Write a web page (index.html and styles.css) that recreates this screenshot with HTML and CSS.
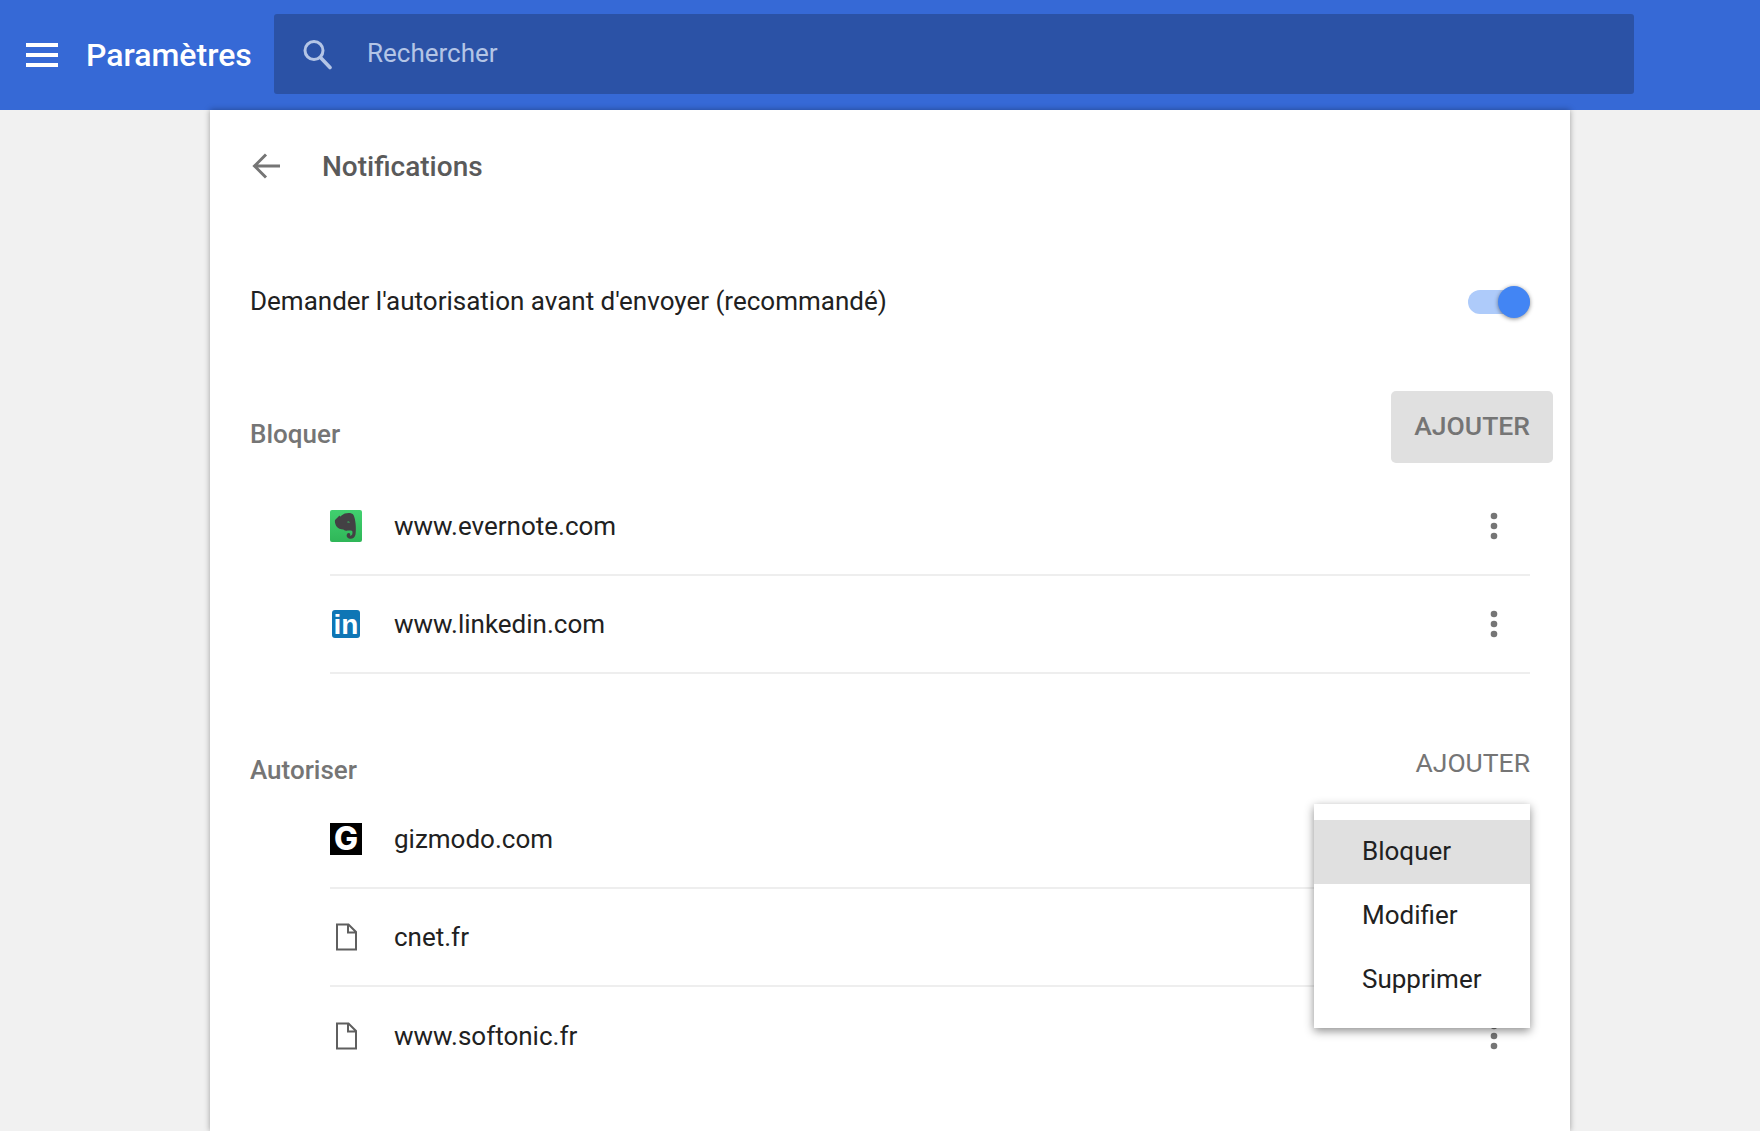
FILE: index.html
```html
<!DOCTYPE html>
<html lang="fr">
<head>
  <meta charset="UTF-8">
  <title>Paramètres</title>
  <link rel="stylesheet" href="styles.css">
</head>
<body>
<header class="top-bar">
  <svg class="menu-icon" viewBox="0 0 32 24" width="32" height="24">
    <path d="M0 0h32v4H0zM0 10h32v4H0zM0 20h32v4H0z" fill="#fff"/>
  </svg>
  <div class="app-title">Paramètres</div>
  <div class="search-box">
    <svg class="search-icon" viewBox="0 0 30 32" width="30" height="32">
      <circle cx="12" cy="12.5" r="9" fill="none" stroke="#b4c5e6" stroke-width="3"/>
      <path d="M18.5 19.5L28 29.5" stroke="#b4c5e6" stroke-width="3.6" stroke-linecap="round"/>
    </svg>
    <span class="search-text">Rechercher</span>
  </div>
</header>

<main class="card">
  <div class="page-head">
    <svg class="back-icon" viewBox="0 0 28 28" width="28" height="28">
      <path d="M28 14H3M14 2.5L2.5 14L14 25.5" fill="none" stroke="#757575" stroke-width="3"/>
    </svg>
    <h1>Notifications</h1>
  </div>

  <div class="ask-row">
    <span>Demander l'autorisation avant d'envoyer (recommandé)</span>
    <div class="toggle"><div class="toggle-thumb"></div></div>
  </div>

  <section class="block-section">
    <div class="section-head">
      <h2>Bloquer</h2>
      <button class="add-btn add-btn-active"><span class="add-label">AJOUTER</span></button>
    </div>
    <div class="site-list">
      <div class="site-row">
        <div class="site-icon evernote">
          <svg viewBox="0 0 32 32" width="32" height="32">
            <path d="M5 10L9.5 5.5C10 7 10.5 6.5 11.5 5.5C15 2.5 21.5 2.2 23.5 5C25.5 9 26.5 18 25.5 24.5C25 28 21.5 29.5 19 28.5C16 27.5 16 23.5 18.5 23C20 22.8 21 24.5 19.8 25.6C22 26 22.8 24 22.4 21.5C22 20 20 20.5 17.5 20.5C15.5 21 14 20.5 13.5 19.5C11 19.5 7.5 18.5 6.2 16C5 13.5 4.7 12 5 10Z" fill="#434144"/>
            <path d="M17.5 11.5C18.5 11.2 19.6 11.6 20 12.7C19 12.4 18.2 12.4 17.5 12.7Z" fill="#37c564"/>
          </svg>
        </div>
        <span class="site-name">www.evernote.com</span>
        <svg class="more-icon" viewBox="0 0 8 28" width="8" height="28"><circle cx="4" cy="4" r="3.3"/><circle cx="4" cy="14" r="3.3"/><circle cx="4" cy="24" r="3.3"/></svg>
      </div>
      <div class="site-row">
        <div class="site-icon"><div class="linkedin">in</div></div>
        <span class="site-name">www.linkedin.com</span>
        <svg class="more-icon" viewBox="0 0 8 28" width="8" height="28"><circle cx="4" cy="4" r="3.3"/><circle cx="4" cy="14" r="3.3"/><circle cx="4" cy="24" r="3.3"/></svg>
      </div>
    </div>
  </section>

  <section class="allow-section">
    <div class="section-head">
      <h2>Autoriser</h2>
      <button class="add-btn"><span class="add-label">AJOUTER</span></button>
    </div>
    <div class="site-list">
      <div class="site-row">
        <div class="site-icon gizmodo">G</div>
        <span class="site-name">gizmodo.com</span>
      </div>
      <div class="site-row">
        <div class="site-icon">
          <svg viewBox="0 0 32 32" width="32" height="32">
            <path d="M7 3.5H18.5L26 11V28.5H7ZM18 3.5V11.5H26" fill="none" stroke="#5f5f5f" stroke-width="2"/>
          </svg>
        </div>
        <span class="site-name">cnet.fr</span>
      </div>
      <div class="site-row site-row-last">
        <div class="site-icon">
          <svg viewBox="0 0 32 32" width="32" height="32">
            <path d="M7 3.5H18.5L26 11V28.5H7ZM18 3.5V11.5H26" fill="none" stroke="#5f5f5f" stroke-width="2"/>
          </svg>
        </div>
        <span class="site-name">www.softonic.fr</span>
        <svg class="more-icon" viewBox="0 0 8 28" width="8" height="28"><circle cx="4" cy="4" r="3.3"/><circle cx="4" cy="14" r="3.3"/><circle cx="4" cy="24" r="3.3"/></svg>
      </div>
    </div>
  </section>

  <div class="popup-menu">
    <div class="popup-item popup-item-active">Bloquer</div>
    <div class="popup-item">Modifier</div>
    <div class="popup-item">Supprimer</div>
  </div>
</main>
</body>
</html>
```

FILE: styles.css
```css
* {
  margin: 0;
  padding: 0;
  box-sizing: border-box;
}

body {
  background-color: #f1f1f1;
  color: #212121;
  font-family: Roboto, "Liberation Sans", sans-serif;
  height: 100vh;
  overflow: hidden;
}

.top-bar {
  height: 110px;
  background-color: #3669d6;
  display: flex;
  align-items: center;
  padding-left: 26px;
}

.app-title {
  color: white;
  font-size: 32px;
  font-weight: 500;
  margin-left: 28px;
  width: 188px;
}

.search-box {
  width: 1360px;
  height: 80px;
  margin-top: -2px;
  background-color: #2b52a6;
  border-radius: 3px;
  display: flex;
  align-items: center;
  padding-left: 28px;
}

.search-text {
  color: #b4c5e6;
  font-size: 26px;
  margin-left: 35px;
  margin-bottom: 2px;
}

.card {
  position: relative;
  width: 1360px;
  height: 1021px;
  margin-left: 210px;
  padding: 0 40px;
  background-color: white;
  box-shadow: 0 0 6px rgba(0, 0, 0, 0.35);
}

.page-head {
  height: 112px;
  display: flex;
  align-items: center;
}

.back-icon {
  margin-left: 2px;
}

.page-head h1 {
  font-size: 28px;
  font-weight: 500;
  color: #5a5a5a;
  margin-left: 42px;
}

.ask-row {
  height: 158px;
  margin-bottom: 11px;
  display: flex;
  align-items: center;
  justify-content: space-between;
  font-size: 26px;
}

.toggle {
  position: relative;
  width: 62px;
  height: 24px;
  margin-top: 1px;
  border-radius: 12px;
  background-color: #aecbfa;
}

.toggle-thumb {
  position: absolute;
  right: 0;
  top: -4px;
  width: 32px;
  height: 32px;
  border-radius: 50%;
  background-color: #4285f4;
  box-shadow: 0 1px 4px rgba(0, 0, 0, 0.45);
}

.section-head {
  height: 72px;
  display: flex;
  align-items: center;
  justify-content: space-between;
}

.section-head h2 {
  font-size: 26px;
  font-weight: 500;
  color: #757575;
  margin-top: 14px;
}

.add-btn {
  height: 72px;
  padding: 0 23px;
  margin-right: -23px;
  border: none;
  border-radius: 5px;
  background: none;
  color: #757575;
  font-family: inherit;
  font-size: 26.5px;
}

.add-label {
  position: relative;
  top: -1px;
}

.add-btn-active {
  background-color: #e0e0e0;
  font-weight: 500;
}

.add-btn-active .add-label {
  top: -2px;
}

.block-section .site-list {
  margin-top: 15px;
}

.allow-section {
  margin-top: 53px;
}

.allow-section .site-list {
  margin-top: -8px;
}

.site-list {
  margin-left: 80px;
}

.site-row {
  height: 98px;
  display: flex;
  align-items: center;
  border-bottom: 2px solid #eeeeee;
}

.site-row-last {
  border-bottom: none;
}

.site-icon {
  width: 32px;
  height: 32px;
  flex: none;
}

.site-name {
  font-size: 26px;
  margin-left: 32px;
  flex: 1;
}

.more-icon {
  fill: #757575;
  margin-right: 32px;
}

.evernote {
  background: linear-gradient(#41d16f, #2fb658);
  border-radius: 2px;
}

.linkedin {
  width: 28px;
  height: 28px;
  margin: 2px;
  background-color: #0f76b5;
  border-radius: 3px;
  color: white;
  font-family: "Liberation Sans", sans-serif;
  font-size: 28px;
  font-weight: bold;
  line-height: 29px;
  text-align: center;
}

.gizmodo {
  background-color: black;
  color: white;
  font-family: Inter, sans-serif;
  font-size: 32px;
  font-weight: 800;
  line-height: 32px;
  text-align: center;
}

.popup-menu {
  position: absolute;
  top: 694px;
  right: 40px;
  width: 216px;
  padding: 16px 0;
  background-color: white;
  box-shadow: 0 3px 9px rgba(0, 0, 0, 0.45);
}

.popup-item {
  height: 64px;
  line-height: 62px;
  padding-left: 48px;
  font-size: 26px;
}

.popup-item-active {
  background-color: #e0e0e0;
}
```
